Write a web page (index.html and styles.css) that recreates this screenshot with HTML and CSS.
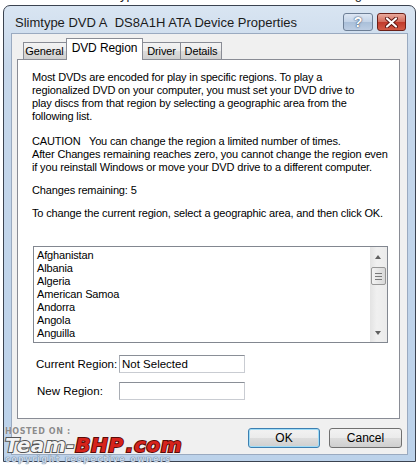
FILE: index.html
```html
<!DOCTYPE html>
<html lang="en">
<head>
  <meta charset="UTF-8" />
  <title>Slimtype DVD A DS8A1H ATA Device Properties</title>
  <link rel="stylesheet" href="styles.css">
</head>
<body>
  <div class="desktop">
    <div class="behind">
      <span>Name</span><span>Type</span><span>Date modified</span><span>Tags</span>
    </div>

    <div class="dialog">
      <div class="titlebar">
        <span class="title">Slimtype DVD A&nbsp; DS8A1H ATA Device Properties</span>
        <div class="caption-btns">
          <div class="cap help">?</div>
          <div class="cap close">
            <svg width="13" height="11" viewBox="0 0 13 11">
              <path d="M2 1.5 L11 9.5 M11 1.5 L2 9.5" stroke="#5a1510" stroke-width="4" stroke-linecap="round"/>
              <path d="M2 1.5 L11 9.5 M11 1.5 L2 9.5" stroke="#fff" stroke-width="2.2" stroke-linecap="round"/>
            </svg>
          </div>
        </div>
      </div>

      <div class="client">
        <div class="tabs">
          <div class="tab t-general">General</div>
          <div class="tab t-region active">DVD Region</div>
          <div class="tab t-driver">Driver</div>
          <div class="tab t-details">Details</div>
        </div>

        <div class="page">
          <p class="p1">Most DVDs are encoded for play in specific regions. To play a<br>regionalized DVD on your computer, you must set your DVD drive to<br>play discs from that region by selecting a geographic area from the<br>following list.</p>
          <p class="p2">CAUTION &nbsp; You can change the region a limited number of times.<br>After Changes remaining reaches zero, you cannot change the region even<br>if you reinstall Windows or move your DVD drive to a different computer.</p>
          <p class="p3">Changes remaining: 5</p>
          <p class="p4">To change the current region, select a geographic area, and then click OK.</p>

          <div class="listbox">
            <ul class="items">
              <li>Afghanistan</li>
              <li>Albania</li>
              <li>Algeria</li>
              <li>American Samoa</li>
              <li>Andorra</li>
              <li>Angola</li>
              <li>Anguilla</li>
              <li>Antigua and Barbuda</li>
            </ul>
            <div class="scrollbar">
              <div class="arrow up"></div>
              <div class="thumb"><span></span><span></span><span></span></div>
              <div class="track"></div>
              <div class="arrow down"></div>
            </div>
          </div>

          <div class="fields">
            <label class="lbl">Current Region:</label>
            <div class="field">Not Selected</div>
            <label class="lbl lbl-new">New Region:</label>
            <div class="field"></div>
          </div>
        </div>

        <div class="buttons">
          <button class="btn default">OK</button>
          <button class="btn">Cancel</button>
        </div>
      </div>
    </div>

    <div class="watermark">
      <div class="hosted">HOSTED ON :</div>
      <div class="logo"><span class="team">Team-</span><span class="bhp">BHP</span><span class="bhp dotcom">.com</span></div>
      <div class="copy">copyright respective owners</div>
    </div>
  </div>
</body>
</html>
```

FILE: styles.css
```css
body { margin: 0; background: #fff; font-family: "Liberation Sans", Arial, sans-serif; font-size: 11px; color: #000; }
.desktop { position: relative; width: 420px; height: 467px; overflow: hidden; background: #fff; }

.behind { position: absolute; top: -13px; left: 18px; display: flex; gap: 60px; font-size: 13px; color: #222; }

/* window frame */
.dialog {
  position: absolute; left: 3px; top: 5px; width: 413px; height: 457px; box-sizing: border-box;
  border: 1px solid #3b4350; border-radius: 7px 7px 0 0;
  background: linear-gradient(#d9e5f2, #c6d7ea 60px, #bcd2ea);
  display: flex; flex-direction: column;
}
.titlebar { height: 27px; display: flex; align-items: flex-start; padding-left: 11px; padding-right: 9px; }
.title { font-size: 13px; color: #1b1b1b; margin-top: 9px; flex: 1; white-space: nowrap; }
.caption-btns { display: flex; gap: 4px; margin-top: 7px; }
.cap { height: 18px; box-sizing: border-box; border: 1px solid #6d7f96; border-radius: 3px; display: flex; align-items: center; justify-content: center; }
.help {
  width: 30px; background: linear-gradient(#dde7f3, #c2d3e7 50%, #a9bfd9 50%, #bccde3);
  color: #fff; font-weight: bold; font-size: 14px; text-shadow: 0 0 2px #3d5170, 0 0 1px #3d5170;
}
.close {
  width: 29px; border-color: #6b2018;
  background: linear-gradient(#e9a99c, #d36b5b 50%, #c0392a 50%, #d25a45);
}

.client {
  flex: 1; margin: 0 7px 6px; background: #f0f0f0; border: 1px solid #9aaac0;
  padding: 4px 7px 0 5px; display: flex; flex-direction: column;
}

/* tabs */
.tabs { display: flex; align-items: flex-end; height: 21px; padding-left: 6px; }
.tab {
  height: 17px; box-sizing: border-box; border: 1px solid #898c95; border-bottom: none;
  background: linear-gradient(#f3f3f3, #ebebeb 50%, #dddddd 50%, #cfcfcf);
  display: flex; align-items: center; justify-content: center; margin-left: -1px; font-size: 11px;
  white-space: nowrap; letter-spacing: -0.1px;
}
.t-general { width: 45px; margin-left: 0; padding-right: 2px; }
.t-region { width: 77px; }
.t-driver { width: 40px; padding-left: 1px; }
.t-details { width: 42px; }
.tab.active {
  height: 22px; margin-bottom: -1px; background: #fff; position: relative; z-index: 1;
  margin-left: -2px; margin-right: -1px; padding-bottom: 3px; font-size: 12px;
}

.page {
  background: #fff; border: 1px solid #898c95; height: 360px; box-sizing: border-box;
  padding: 11px 10px 0 14px; overflow: hidden;
}
.page p { margin: 0; line-height: 13px; letter-spacing: -0.15px; white-space: nowrap; }
.page .p2 { margin-top: 12px; }
.page .p3 { margin-top: 10px; }
.page .p4 { margin-top: 10px; }

/* list */
.listbox {
  margin: 26px 0 0 1px; width: 355px; height: 97px; box-sizing: border-box;
  border: 1px solid #828790; display: flex; overflow: hidden;
}
.items { list-style: none; margin: 0; padding: 2px 0 0 3px; flex: 1; }
.items li { line-height: 13px; height: 13px; white-space: nowrap; letter-spacing: -0.15px; }
.scrollbar { width: 17px; background: linear-gradient(90deg, #e3e3e3, #f0f0f0 40%, #ebebeb); display: flex; flex-direction: column; align-items: center; }
.arrow { height: 17px; width: 17px; position: relative; }
.arrow::after {
  content: ""; position: absolute; left: 5px; border-left: 3.5px solid transparent; border-right: 3.5px solid transparent;
}
.arrow.up::after { top: 8px; border-bottom: 4px solid #606060; }
.arrow.down::after { top: 6px; border-top: 4px solid #606060; }
.thumb {
  width: 15px; height: 18px; box-sizing: border-box; margin-top: 3px; border: 1px solid #979797; border-radius: 2px;
  background: linear-gradient(90deg, #f3f3f3, #e6e6e6 50%, #d8d8d8);
  display: flex; flex-direction: column; align-items: center; justify-content: center; gap: 2px;
}
.thumb span { width: 7px; height: 1px; background: #7a7a7a; }
.track { flex: 1; }

/* region fields */
.fields { display: grid; grid-template-columns: 83px 126px; row-gap: 9px; margin: 12px 0 0 4px; align-items: center; }
.lbl { white-space: nowrap; font-size: 11.5px; }
.lbl-new { padding-left: 1px; }
.field {
  height: 18px; box-sizing: border-box; border: 1px solid #c9ccd2; border-top-color: #8a8f97; border-left-color: #a9adb4;
  background: #fff; padding: 1px 0 0 2px; line-height: 14px; font-size: 11.5px;
}

/* buttons */
.buttons { display: flex; justify-content: flex-end; gap: 9px; margin: 9px -2px 0 0; }
.btn {
  width: 73px; height: 20px; border: 1px solid #707070; border-radius: 3px; font-family: inherit; font-size: 12px;
  background: linear-gradient(#f2f2f2, #ebebeb 50%, #dddddd 50%, #cfcfcf); padding: 0; color: #000;
}
.btn.default { width: 72px; border-color: #3c7fb1; box-shadow: inset 0 0 0 1px #9fdcf7; }

/* overlay watermark */
.watermark { position: absolute; left: 5px; top: 428px; font-family: "DejaVu Sans", Verdana, sans-serif; font-weight: bold; }
.hosted { font-size: 8px; line-height: 8px; height: 8px; color: #8b8b8b; letter-spacing: 0.6px; text-shadow: 0 0 1px #fff; }
.logo {
  font-size: 20px; font-style: italic; line-height: 19px; height: 19px; letter-spacing: 0.6px;
  white-space: nowrap; paint-order: stroke fill;
}
.team { color: #f4f4f4; -webkit-text-stroke: 2px #555; }
.bhp { color: #d6231c; -webkit-text-stroke: 2px #5a0c08; }
.dotcom { margin-left: 2px; }
.copy { font-size: 8px; color: #c6d5e6; letter-spacing: 1.4px; line-height: 9px; white-space: nowrap; text-shadow: 0 0 1px #6a7a90, 0 0 1px #6a7a90; }
```
